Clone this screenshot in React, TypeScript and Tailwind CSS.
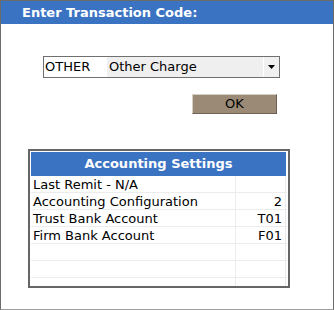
import React from "react";

const rows: [string, string][] = [
  ["Last Remit - N/A", ""],
  ["Accounting Configuration", "2"],
  ["Trust Bank Account", "T01"],
  ["Firm Bank Account", "F01"],
  ["", ""],
  ["", ""],
  ["", ""],
];

export default function App() {
  return (
    <div
      className="w-[334px] h-[310px] bg-white border border-[#6b6b6b] border-b-[#9c9c9c] flex flex-col overflow-hidden text-[13px] text-black"
      style={{ fontFamily: '"DejaVu Sans", Verdana, sans-serif' }}
    >
      {/* Title bar */}
      <div className="h-[23px] shrink-0 bg-[#3b73c3] text-white font-bold pl-[21px] leading-[23px]">
        Enter Transaction Code:
      </div>

      {/* Transaction code picker */}
      <div className="mt-[32px] ml-[42px] w-[237px] h-[22px] border border-[#707070] flex">
        <div className="w-[63px] pl-[1px] leading-[20px]">OTHER</div>
        <div className="flex-1 bg-[#efefef] pl-[2px] leading-[20px]">Other Charge</div>
        <div className="w-[16px] bg-[#f0f0f0] border-l border-white flex items-center justify-center">
          <svg width="7" height="4" viewBox="0 0 7 4">
            <path d="M0 0h7L3.5 4z" fill="#000" />
          </svg>
        </div>
      </div>

      <div className="flex justify-end pr-[56px] mt-[16px]">
        <button className="w-[85px] h-[20px] bg-[#9b8a76] border border-[#d6cfc4] border-r-[#6e6254] border-b-[#6e6254] leading-[18px] text-[13px]">
          OK
        </button>
      </div>

      {/* Accounting settings */}
      <div className="mt-[35px] ml-[27px] w-[262px] h-[139px] border-2 border-[#666666] overflow-hidden pt-[1px] pl-[1px]">
        <div className="w-[255px] h-[24px] bg-[#3b73c3] text-white font-bold text-center leading-[24px]">
          Accounting Settings
        </div>
        <div className="w-[256px]">
          {rows.map(([label, value], i) => (
            <div key={i} className="flex h-[17px] border-b border-[#ececec]">
              <div className="w-[205px] border-r border-[#ececec] pl-[2px] leading-[17px]">{label}</div>
              <div className="w-[50px] border-r border-[#ececec] text-right pr-[3px] leading-[17px]">{value}</div>
            </div>
          ))}
        </div>
      </div>
    </div>
  );
}
